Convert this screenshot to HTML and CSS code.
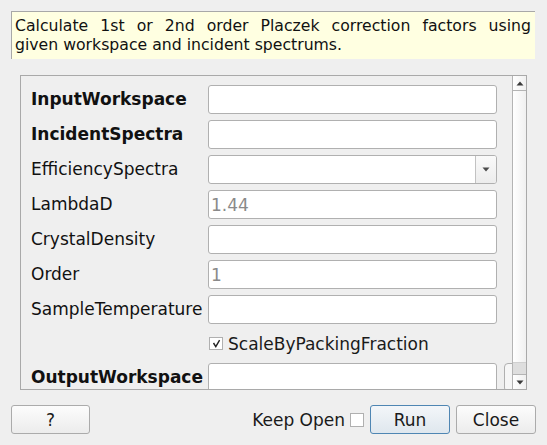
FILE: index.html
```html
<!DOCTYPE html>
<html>
<head>
<meta charset="utf-8">
<link rel="stylesheet" href="styles.css">
</head>
<body>
<div class="dialog">
  <div class="desc"><span class="desc-line">Calculate 1st or 2nd order Placzek correction factors using</span> <span>given workspace and incident spectrums.</span></div>

  <div class="scroll">
    <div class="content">
      <div class="form">
        <label class="lbl bold">InputWorkspace</label>
        <div class="field"></div>
        <span></span>

        <label class="lbl bold">IncidentSpectra</label>
        <div class="field"></div>
        <span></span>

        <label class="lbl">EfficiencySpectra</label>
        <div class="field combo">
          <div class="combo-text"></div>
          <div class="combo-btn"><svg width="8" height="5" viewBox="0 0 8 5"><path d="M0.5 0.5 H7.5 L4 4.5 Z" fill="#4a4a4a"/></svg></div>
        </div>
        <span></span>

        <label class="lbl">LambdaD</label>
        <div class="field"><span class="ph">1.44</span></div>
        <span></span>

        <label class="lbl">CrystalDensity</label>
        <div class="field"></div>
        <span></span>

        <label class="lbl">Order</label>
        <div class="field"><span class="ph">1</span></div>
        <span></span>

        <label class="lbl">SampleTemperature</label>
        <div class="field"></div>
        <span></span>

        <span></span>
        <div class="check-row">
          <span class="cbox"><svg width="11" height="11" viewBox="0 0 11 11"><path d="M2.5 5 L4.8 8.6 L8.6 2.2" fill="none" stroke="#222" stroke-width="1.4"/></svg></span>
          <span class="check-label">ScaleByPackingFraction</span>
        </div>
        <span></span>

        <label class="lbl bold">OutputWorkspace</label>
        <div class="field"></div>
        <div class="extra"></div>
      </div>
    </div>
    <div class="vbar">
      <div class="vbtn up"><svg width="8" height="5" viewBox="0 0 8 5"><path d="M0.5 4.5 H7.5 L4 0.5 Z" fill="#3a3a3a"/></svg></div>
      <div class="track"></div>
      <div class="thumb"></div>
      <div class="vbtn down"><svg width="8" height="5" viewBox="0 0 8 5"><path d="M0.5 0.5 H7.5 L4 4.5 Z" fill="#3a3a3a"/></svg></div>
    </div>
  </div>

  <div class="buttons">
    <button class="btn">?</button>
    <div class="spacer"></div>
    <span class="keep">Keep Open</span>
    <span class="cbox keep-box"></span>
    <button class="btn default">Run</button>
    <button class="btn">Close</button>
  </div>
</div>
</body>
</html>
```

FILE: styles.css
```css
html, body {
  margin: 0;
  padding: 0;
  background: #efefef;
}

body {
  font-family: "DejaVu Sans", "Liberation Sans", sans-serif;
  font-size: 17px;
  color: #1a1a1a;
  width: 547px;
  height: 445px;
  overflow: hidden;
}

.dialog {
  padding: 11px 11px 0 11px;
}

.desc {
  width: 516px;
  height: 38px;
  padding: 4px 4px 5px 3px;
  background: #ffffe1;
  border-top: 1px solid #a8a8a8;
  border-left: 1px solid #a8a8a8;
  font-size: 15.7px;
  line-height: 19px;
  color: #111;
}

.desc-line {
  display: block;
  text-align: justify;
  text-align-last: justify;
}

.scroll {
  margin: 16px 0 0 9px;
  width: 505px;
  height: 313px;
  border: 1px solid #a9a9a9;
  display: flex;
  overflow: hidden;
}

.content {
  width: 491px;
  height: 313px;
  overflow: hidden;
}

.form {
  padding: 9px 0 0 10px;
  display: grid;
  grid-template-columns: 171px 289px 30px;
  grid-template-rows: repeat(7, 29px) 27px 29px;
  column-gap: 6px;
  row-gap: 6px;
  align-items: center;
}

.lbl {
  white-space: nowrap;
  color: #111;
  margin-top: -1px;
}

.bold {
  font-weight: bold;
}

.field {
  box-sizing: border-box;
  height: 29px;
  background: #fff;
  border: 1px solid #b0b0b0;
  border-radius: 3px;
  display: flex;
  align-items: center;
  padding-left: 2px;
}

.ph {
  color: #8a8a8a;
}

.combo {
  padding-left: 0;
}

.combo-text {
  flex: 1;
}

.combo-btn {
  width: 20px;
  height: 100%;
  border-left: 1px solid #c2c2c2;
  background: linear-gradient(#fafafa, #ececec);
  border-radius: 0 2px 2px 0;
  display: flex;
  align-items: center;
  justify-content: center;
}

.check-row {
  display: flex;
  align-items: center;
  height: 27px;
}

.form > span:empty {
  height: 0;
}

.cbox {
  box-sizing: border-box;
  display: inline-flex;
  align-items: center;
  justify-content: center;
  width: 14px;
  height: 13px;
  background: #fff;
  border: 1px solid #b0b0b0;
  margin-left: 1px;
}

.check-label {
  margin-left: 5px;
  white-space: nowrap;
}

.extra {
  box-sizing: border-box;
  height: 29px;
  margin-left: 1px;
  background: #f6f6f6;
  border: 1px solid #b0b0b0;
  border-radius: 4px;
}

.vbar {
  width: 13px;
  height: 313px;
  border-left: 1px solid #b4b4b4;
  display: flex;
  flex-direction: column;
  background: linear-gradient(to right, #ffffff, #f0f0f0);
}

.vbtn {
  height: 14px;
  display: flex;
  align-items: center;
  justify-content: center;
  background: linear-gradient(to right, #ffffff, #f0f0f0);
}

.vbtn.up {
  border-bottom: 1px solid #b4b4b4;
}

.vbtn.down {
  border-top: 1px solid #b4b4b4;
}

.track {
  flex: 1;
}

.thumb {
  height: 11px;
  background: #dedede;
  border-top: 1px solid #d0d0d0;
}

.buttons {
  margin-top: 15px;
  display: flex;
  align-items: center;
  height: 29px;
}

.spacer {
  flex: 1;
}

.btn {
  box-sizing: border-box;
  width: 80px;
  height: 29px;
  font-family: "DejaVu Sans", "Liberation Sans", sans-serif;
  font-size: 17px;
  color: #1a1a1a;
  border: 1px solid #ababab;
  border-radius: 3px;
  background: linear-gradient(#fcfcfc, #ececec);
  padding: 0;
  margin: 0;
}

.btn:first-child {
  width: 79px;
}

.btn.default {
  border-color: #4f86b3;
  background: linear-gradient(#f3f6f9, #dfe7ee);
  margin-right: 6px;
}

.keep {
  white-space: nowrap;
}

.keep-box {
  width: 14px;
  height: 14px;
  margin-left: 5px;
  margin-right: 6px;
}
```
